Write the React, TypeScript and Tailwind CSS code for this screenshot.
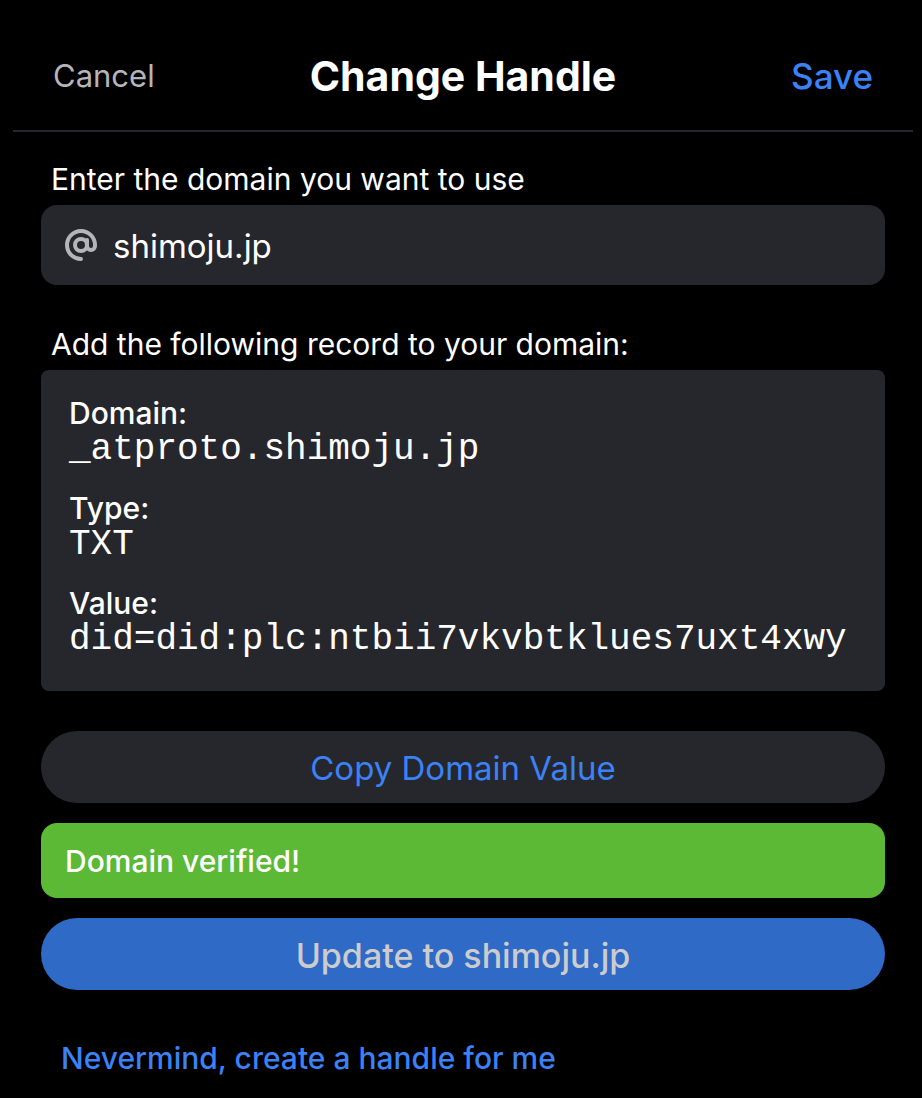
import { useState } from 'react';

const record = [
  { label: 'Domain:', value: '_atproto.shimoju.jp' },
  { label: 'Type:', value: 'TXT' },
  { label: 'Value:', value: 'did=did:plc:ntbii7vkvbtklues7uxt4xwy' },
];

function AtIcon() {
  return (
    <svg viewBox="0 0 32 32" className="h-8 w-8 shrink-0" fill="none" stroke="#b4b5bb" strokeWidth="4" strokeLinecap="round" strokeLinejoin="round" aria-hidden="true">
      <circle cx="16" cy="16" r="6" />
      <path d="M22 11v6a4 4 0 0 0 8 0v-1A14 14 0 1 0 16 30" />
    </svg>
  );
}

export default function App() {
  const [domain, setDomain] = useState('shimoju.jp');
  return (
    <main className="min-h-screen bg-black pt-[22px] pr-[9px] pl-[13px] font-['Inter',sans-serif] text-white">
      <header className="grid h-[110px] grid-cols-[1fr_auto_1fr] items-center border-b-2 border-[#26272d] px-10">
        <button type="button" className="justify-self-start text-[31px] text-[#b4b5bb]">Cancel</button>
        <h1 className="pt-0.5 text-[41px] font-bold">Change Handle</h1>
        <button type="button" className="justify-self-end text-[35px] font-medium text-[#3b82f6]">Save</button>
      </header>
      <div className="px-7 pt-[27px] pb-4">
        <label htmlFor="domain" className="block px-2.5 text-[30px] leading-10">Enter the domain you want to use</label>
        <div className="mt-1.5 flex h-20 items-center gap-4 rounded-2xl bg-[#26272d] px-6">
          <AtIcon />
          <input id="domain" value={domain} onChange={(e) => setDomain(e.target.value)} className="min-w-0 flex-1 bg-transparent pt-1 text-[33px] outline-none" />
        </div>
        <p className="mt-[39px] px-2.5 text-[30px] leading-10">Add the following record to your domain:</p>
        <dl className="mt-1.5 flex flex-col gap-[21px] rounded-lg bg-[#26272d] px-7 pt-6 pb-[33px]">
          {record.map((r) => (
            <div key={r.label}>
              <dt className="text-[30px] leading-[38px] font-medium">{r.label}</dt>
              <dd className="font-['Liberation_Mono',monospace] text-[36px] leading-9 break-all">{r.value}</dd>
            </div>
          ))}
        </dl>
        <button type="button" className="mt-10 h-18 w-full rounded-full bg-[#26272d] pt-1 text-[33px] text-[#3b82f6]">Copy Domain Value</button>
        <p role="status" className="mt-5 flex h-[75px] items-center rounded-2xl bg-[#5bb936] px-6 pt-0.5 text-[30px] font-medium">Domain verified!</p>
        <button type="button" className="mt-5 h-18 w-full rounded-full bg-[#2f6ac7] pt-0.5 text-[34px] font-medium text-[#cccccc]">Update to {domain}</button>
        <a href="#handle" className="mt-12 block px-5 text-[30px] leading-10 font-medium text-[#3b82f6]">Nevermind, create a handle for me</a>
      </div>
    </main>
  );
}
